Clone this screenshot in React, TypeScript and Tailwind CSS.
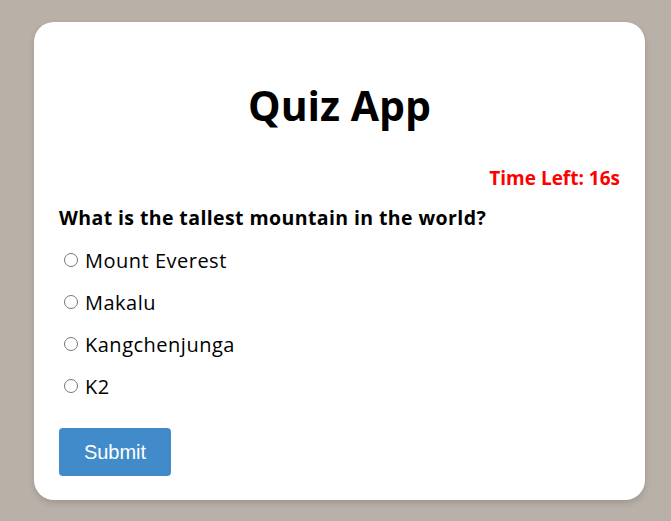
const options = ["Mount Everest", "Makalu", "Kangchenjunga", "K2"];

export default function App() {
  return (
    <div className="min-h-[521px] bg-[#b9b1a8] pt-[22px] pb-[21px] font-['Open_Sans',sans-serif]">
      <div className="ml-[34px] w-[611px] rounded-[20px] bg-white px-[25px] pt-[59px] pb-[24px] shadow-[0_3px_6px_rgba(0,0,0,0.15)]">
        <h1 className="text-center text-[41px] font-bold leading-[48px] text-black">Quiz App</h1>
        <div className="mt-[35px] text-right text-[19px] font-bold leading-[28px] text-[#ff0000]">
          Time Left: 16s
        </div>
        <div className="mt-[12px] text-[19.5px] font-bold leading-[28px] tracking-[0.4px] text-black">
          What is the tallest mountain in the world?
        </div>
        <div className="mt-[15px] flex flex-col gap-[14px]">
          {options.map((o) => (
            <label key={o} className="flex items-start text-[20px] leading-[28px] tracking-[0.5px] text-black">
              <input type="radio" name="q" className="mt-[6px] mr-[7px] ml-[5px] h-[14px] w-[14px]" />
              <span>{o}</span>
            </label>
          ))}
        </div>
        <button className="mt-[27px] h-[48px] w-[112px] rounded-[4px] bg-[#428bca] font-['Liberation_Sans',sans-serif] text-[20px] text-white">
          Submit
        </button>
      </div>
    </div>
  );
}
